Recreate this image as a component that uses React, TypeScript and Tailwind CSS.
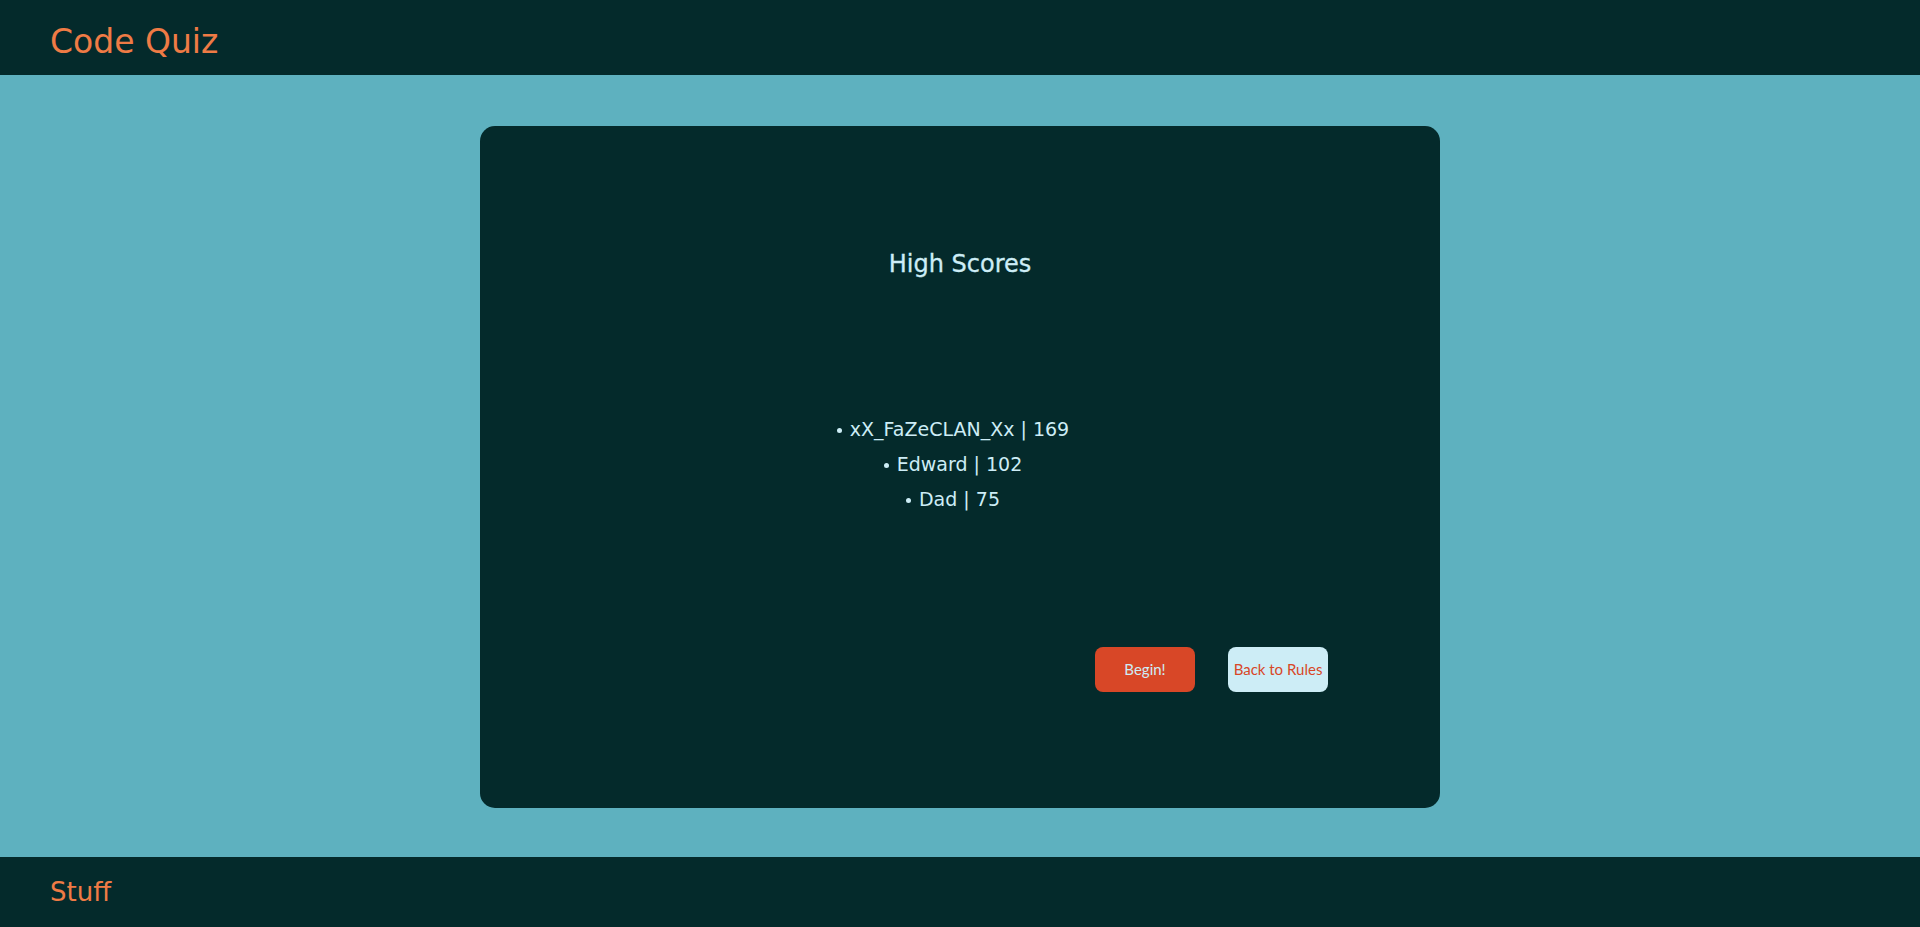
import React from "react";

const scores = [
  { name: "xX_FaZeCLAN_Xx", score: 169 },
  { name: "Edward", score: 102 },
  { name: "Dad", score: 75 },
];

export default function App() {
  return (
    <div className="min-h-screen flex flex-col bg-[#5eb1bf] font-['DejaVu_Sans',sans-serif]">
      <header className="h-[75px] bg-[#042a2b] px-[50px] flex items-center">
        <h1 className="text-[33px] leading-none text-[#ef7b45] mt-[7px]">Code Quiz</h1>
      </header>

      <main className="h-[782px] flex justify-center pt-[51px]">
        <section className="w-[960px] h-[682px] rounded-[15px] bg-[#042a2b] flex flex-col">
          <h2 className="mt-[122px] text-center text-[24px] leading-[32px] text-[#cdedf6] [-webkit-text-stroke:0.3px_#cdedf6]">
            High Scores
          </h2>
          <ul className="mt-[132px] pr-[14px] text-center text-[19px] leading-[35px] text-[#cdedf6]">
            {scores.map((s) => (
              <li key={s.name}>
                <span className="inline-block w-[5px] h-[5px] rounded-full bg-[#cdedf6] mr-[8px] align-middle" />
                {s.name} | {s.score}
              </li>
            ))}
          </ul>
          <div className="mt-[130px] flex justify-end gap-[33px] pr-[112px]">
            <button className="w-[100px] h-[45px] rounded-lg bg-[#d84727] text-[#cdedf6] text-[15px] font-['Lato',sans-serif]">
              Begin!
            </button>
            <button className="w-[100px] h-[45px] rounded-lg bg-[#cdedf6] text-[#d84727] text-[15px] font-['Lato',sans-serif]">
              Back to Rules
            </button>
          </div>
        </section>
      </main>

      <footer className="h-[70px] bg-[#042a2b] px-[50px] flex items-center">
        <p className="text-[26px] leading-none text-[#ef7b45]">Stuff</p>
      </footer>
    </div>
  );
}
